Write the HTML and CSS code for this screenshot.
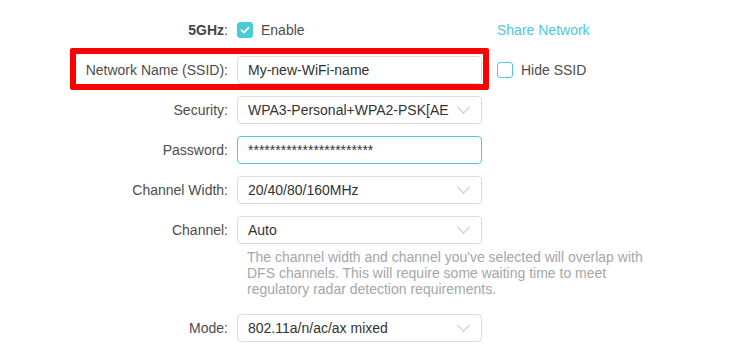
FILE: index.html
```html
<!DOCTYPE html>
<html lang="en">
<head>
    <meta charset="UTF-8">
    <title>Wireless Settings</title>
    <link rel="stylesheet" href="styles.css">
</head>
<body>
    <div class="form">
        <div class="row">
            <label class="label"><b>5GHz</b>:</label>
            <div class="control check-line">
                <span class="checkbox checked">
                    <svg width="10" height="8" viewBox="0 0 10 8"><path d="M1.5 4.2 L4 6.5 L8.6 1.6" fill="none" stroke="#fff" stroke-width="1.8" stroke-linecap="round" stroke-linejoin="round"/></svg>
                </span>
                <span>Enable</span>
            </div>
            <a class="extra link" href="#">Share Network</a>
        </div>

        <div class="row marked">
            <label class="label">Network Name (SSID):</label>
            <div class="control input">My-new-WiFi-name</div>
            <div class="extra check-line">
                <span class="checkbox"></span>
                <span>Hide SSID</span>
            </div>
        </div>

        <div class="row">
            <label class="label">Security:</label>
            <div class="control input select"><span class="value">WPA3-Personal+WPA2-PSK[AE</span><span class="arrow"></span></div>
        </div>

        <div class="row">
            <label class="label">Password:</label>
            <div class="control input focus">***********************</div>
        </div>

        <div class="row">
            <label class="label">Channel Width:</label>
            <div class="control input select"><span class="value">20/40/80/160MHz</span><span class="arrow"></span></div>
        </div>

        <div class="row">
            <label class="label">Channel:</label>
            <div class="control input select"><span class="value">Auto</span><span class="arrow"></span></div>
        </div>

        <p class="hint">The channel width and channel you've selected will overlap with DFS channels. This will require some waiting time to meet regulatory radar detection requirements.</p>

        <div class="row">
            <label class="label">Mode:</label>
            <div class="control input select"><span class="value">802.11a/n/ac/ax mixed</span><span class="arrow"></span></div>
        </div>
    </div>
</body>
</html>
```

FILE: styles.css
```css
* {
    margin: 0;
    padding: 0;
    box-sizing: border-box;
}

body {
    font-family: 'Liberation Sans', Arial, sans-serif;
    font-size: 14px;
    color: #333;
    background-color: #fff;
}

.form {
    padding-top: 16px;
    display: flex;
    flex-direction: column;
    gap: 12px;
}

.row {
    display: flex;
    align-items: center;
    height: 28px;
    position: relative;
}

.label {
    width: 228px;
    text-align: right;
    color: #4d4d4d;
}

.label b {
    color: #444;
}

.control {
    margin-left: 9px;
    width: 245px;
}

.extra {
    margin-left: 15px;
}

.check-line {
    display: flex;
    align-items: center;
    gap: 8px;
    color: #4d4d4d;
}

.checkbox {
    width: 16px;
    height: 16px;
    border: 1.5px solid #4acbd6;
    border-radius: 3px;
    display: flex;
    align-items: center;
    justify-content: center;
}

.checkbox.checked {
    background-color: #4acbd6;
}

.link {
    color: #4acbd6;
    text-decoration: none;
}

.input {
    height: 28px;
    border: 1px solid #dcdcdc;
    border-radius: 4px;
    padding: 0 10px;
    display: flex;
    align-items: center;
    color: #333;
    white-space: nowrap;
}

.input.focus {
    border-color: #4acbd6;
}

.select .value {
    flex: 1;
}

.arrow {
    width: 9px;
    height: 9px;
    border-right: 1.5px solid #c4c4c4;
    border-bottom: 1.5px solid #c4c4c4;
    transform: rotate(45deg);
    margin: 0 3px -1px 6px;
    position: relative;
    top: -3px;
    flex-shrink: 0;
}

/* Marca roja sobre la fila del SSID */
.marked::before {
    content: "";
    box-sizing: border-box;
    position: absolute;
    left: 70px;
    top: -8px;
    width: 419px;
    height: 42px;
    border: 6px solid #ff0000;
    border-radius: 2px;
}

.hint {
    margin-left: 247px;
    width: 405px;
    color: #a6a6a6;
    line-height: 16px;
    margin-top: -7px;
    margin-bottom: 5px;
}
```
